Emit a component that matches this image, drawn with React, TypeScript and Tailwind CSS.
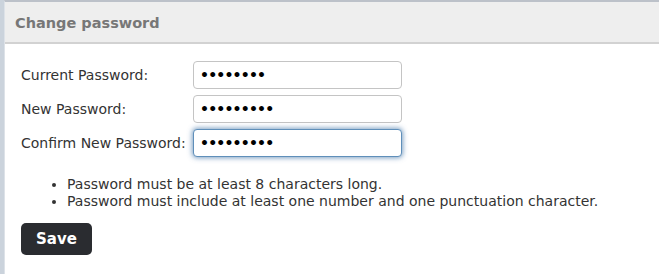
import React from "react";

export default function App() {
  const rows = [
    { label: "Current Password:", value: "abcdefgh", focus: false },
    { label: "New Password:", value: "abcdefghi", focus: false },
    { label: "Confirm New Password:", value: "abcdefghi", focus: true },
  ];
  return (
    <div className="w-[659px] h-[274px] overflow-hidden bg-[#cbd3dc] pl-[4px]" style={{ fontFamily: '"DejaVu Sans", Verdana, sans-serif' }}>
      <div className="w-[700px] h-[300px] bg-white border-l border-t-2 border-l-[#dde2e8] border-t-[#bcc1c9]">
        <div className="h-[42px] bg-[#eeeeee] border-b-2 border-[#d2d2d2] flex items-center pl-[10px] pt-[3px]">
          <span className="text-[14.5px] font-bold text-[#777777]">Change password</span>
        </div>
        <div className="pl-[16px] pt-[17px]">
          <div className="flex flex-col gap-[6px]">
            {rows.map((r) => (
              <div key={r.label} className="flex items-center">
                <label className="w-[172px] text-[14px] text-[#333333] whitespace-nowrap">{r.label}</label>
                <input
                  type="password"
                  readOnly
                  defaultValue={r.value}
                  className={
                    "w-[209px] h-[28px] rounded-[4px] bg-white px-[6px] text-[14px] font-bold tracking-[-0.8px] text-black outline-none " +
                    (r.focus
                      ? "border border-[#5f8fba] shadow-[0_0_5px_1px_rgba(70,120,170,0.7)]"
                      : "border border-[#c4c4c4]")
                  }
                />
              </div>
            ))}
          </div>
          <ul className="mt-[19px] pl-[46px] list-disc text-[14px] text-[#333333] leading-[17px]">
            <li>Password must be at least 8 characters long.</li>
            <li>Password must include at least one number and one punctuation character.</li>
          </ul>
          <button className="mt-[13px] w-[71px] h-[32px] rounded-[5px] bg-[#2a2c30] text-white font-bold text-[15px]">
            Save
          </button>
        </div>
      </div>
    </div>
  );
}
